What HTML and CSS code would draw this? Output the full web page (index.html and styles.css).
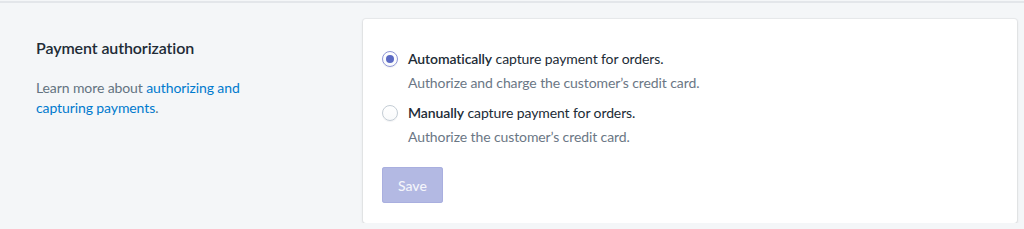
FILE: index.html
```html
<!DOCTYPE html>
<html lang="en">
<head>
    <meta charset="UTF-8">
    <meta name="viewport" content="width=device-width, initial-scale=1.0">
    <title>Payment authorization</title>
    <link rel="stylesheet" href="styles.css">
</head>
<body>

    <div class="divider"></div>

    <div class="section">
        <div class="annotation">
            <h2 class="annotation-title">Payment authorization</h2>
            <p class="annotation-text">
                Learn more about <a href="#">authorizing and capturing payments</a>.
            </p>
        </div>

        <div class="card">
            <div class="choice">
                <label class="choice-label">
                    <input type="radio" name="capture" value="auto" checked>
                    <span class="radio"></span>
                    <span><b>Automatically</b> capture payment for orders.</span>
                </label>
                <div class="choice-help">Authorize and charge the customer’s credit card.</div>
            </div>

            <div class="choice">
                <label class="choice-label">
                    <input type="radio" name="capture" value="manual">
                    <span class="radio"></span>
                    <span><b>Manually</b> capture payment for orders.</span>
                </label>
                <div class="choice-help">Authorize the customer’s credit card.</div>
            </div>

            <button class="save-button" disabled>Save</button>
        </div>
    </div>

</body>
</html>
```

FILE: styles.css
```css
body {
    margin: 0;
    background-color: #f4f6f8;
    font-family: Lato, "Noto Sans", sans-serif;
    font-size: 14px;
    line-height: 20px;
    letter-spacing: -0.1px;
    color: #212b36;
}

.divider {
    height: 2px;
    margin-top: 1px;
    background-color: #e3e6ea;
}

.section {
    display: flex;
    gap: 20px;
    padding: 16px 7px 0 36px;
}

.annotation {
    flex: 0 0 307px;
    padding-top: 17px;
}

.annotation-title {
    margin: 0;
    font-size: 16px;
    line-height: 24px;
    font-weight: 600;
}

.annotation-text {
    margin: 18px 0 0;
    width: 215px;
    color: #637381;
}

.annotation-text a {
    color: #007ace;
    text-decoration: none;
}

.card {
    flex: 1;
    background-color: #fff;
    border-radius: 3px;
    box-shadow: 0 0 0 1px rgba(63, 63, 68, 0.05), 0 1px 3px 0 rgba(63, 63, 68, 0.15);
    padding: 30px 19px 20px;
}

.choice + .choice {
    margin-top: 10px;
}

.choice-label {
    display: flex;
    align-items: center;
    gap: 10px;
    cursor: pointer;
}

.choice-label b {
    font-weight: 600;
}

.choice-label input {
    display: none;
}

.radio {
    width: 14px;
    height: 14px;
    border: 1px solid #c4cdd5;
    border-radius: 50%;
    background: linear-gradient(180deg, #fff, #f9fafb);
    box-shadow: 0 1px 1px rgba(22, 29, 37, 0.05);
    position: relative;
}

.choice-label input:checked + .radio {
    border-color: #8f96d6;
}

.choice-label input:checked + .radio::after {
    content: '';
    position: absolute;
    top: 3px;
    left: 3px;
    width: 8px;
    height: 8px;
    border-radius: 50%;
    background-color: #5c6ac4;
}

.choice-help {
    margin-top: 4px;
    padding-left: 26px;
    color: #6b7785;
}

.save-button {
    margin-top: 20px;
    height: 36px;
    padding: 0 16px;
    border: none;
    border-radius: 3px;
    background-color: #b3b9e3;
    color: #f4f5fb;
    font-family: inherit;
    font-size: 14px;
    font-weight: 500;
    box-shadow: inset 0 0 0 1px #a9afdf;
}
```
